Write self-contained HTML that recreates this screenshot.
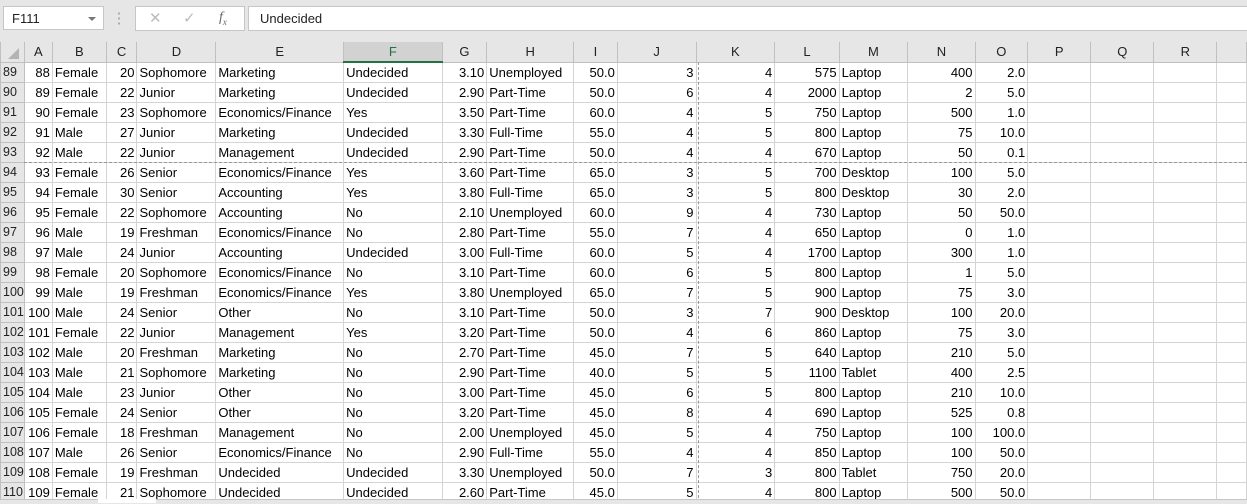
<!DOCTYPE html>
<html><head><meta charset="utf-8"><style>
body{margin:0;width:1247px;height:503px;overflow:hidden;background:#e6e6e6;font-family:"Liberation Sans",sans-serif;position:relative}
.top{position:absolute;left:0;top:0;width:1247px;height:42px;background:#e6e6e6}
.nb{position:absolute;left:3px;top:6px;width:101px;height:24px;background:#fff;border:1px solid #c6c6c6;font-size:13px;line-height:24px;padding-left:8px;box-sizing:border-box;color:#222}
.nb:after{content:"";position:absolute;right:7px;top:10px;border-left:4px solid transparent;border-right:4px solid transparent;border-top:4px solid #777}
.dots{position:absolute;left:118px;top:11px;width:2px;height:14px;background:radial-gradient(circle,#aaa 1px,transparent 1.2px) 0 0/2px 5px}
.fx{position:absolute;left:135px;top:6px;width:110px;height:25px;background:#fff;border:1px solid #c6c6c6;box-sizing:border-box;color:#bbb;font-size:15px}
.fb{position:absolute;left:248px;top:6px;width:1000px;height:25px;background:#fff;border:1px solid #c6c6c6;box-sizing:border-box;font-size:13px;line-height:23px;padding-left:11px;color:#222}
table{position:absolute;left:0;top:42px;border-collapse:collapse;table-layout:fixed;font-size:13px;color:#000;background:#fff}
td{height:19px;border:1px solid #d4d4d4;padding:0 2px;white-space:nowrap;overflow:hidden;line-height:19px}
tr.h td{background:#e6e6e6;text-align:center;color:#222;border-color:#c0c0c0;border-top:none}
td.r{background:#e6e6e6;color:#222;border-color:#c0c0c0;padding:0 0 0 2px;text-align:left;font-size:12.5px}
td.n{text-align:right}
tr.h td.sel{background:#d2d2d2;color:#217346;border-bottom:2px solid #217346}
.hb{position:absolute;left:24px;top:162px;width:1223px;border-top:1px dashed #999}
.vb{position:absolute;left:698px;top:62px;height:441px;border-left:1px dashed #999}
</style></head><body>
<div class="top">
<div class="nb">F111</div>
<div class="dots"></div>
<div class="fx"><span style="position:absolute;left:13px;top:2px">✕</span><span style="position:absolute;left:47px;top:2px">✓</span><span style="position:absolute;left:83px;top:3px;font-family:'Liberation Serif',serif;font-style:italic;color:#666;font-size:14px">f<sub style="font-size:9px">x</sub></span></div>
<div class="fb">Undecided</div>
</div>
<table>
<colgroup><col style="width:16px"><col style="width:28px"><col style="width:54px"><col style="width:31px"><col style="width:79px"><col style="width:128px"><col style="width:99px"><col style="width:45px"><col style="width:87px"><col style="width:44px"><col style="width:80px"><col style="width:80px"><col style="width:65px"><col style="width:69px"><col style="width:68px"><col style="width:53px"><col style="width:64px"><col style="width:64px"><col style="width:64px"><col style="width:30px"></colgroup>
<tr class="h"><td style="background:#e6e6e6;padding:0"><svg width="14" height="14" style="display:block;margin:3px 0 0 5px"><path d="M13 2L13 13L2 13Z" fill="#b4b4b4"/></svg></td><td>A</td><td>B</td><td>C</td><td>D</td><td>E</td><td class="sel">F</td><td>G</td><td>H</td><td>I</td><td>J</td><td>K</td><td>L</td><td>M</td><td>N</td><td>O</td><td>P</td><td>Q</td><td>R</td><td></td></tr>
<tr><td class="r">89</td><td class="n">88</td><td>Female</td><td class="n">20</td><td>Sophomore</td><td>Marketing</td><td>Undecided</td><td class="n">3.10</td><td>Unemployed</td><td class="n">50.0</td><td class="n">3</td><td class="n">4</td><td class="n">575</td><td>Laptop</td><td class="n">400</td><td class="n">2.0</td><td></td><td></td><td></td><td></td></tr>
<tr><td class="r">90</td><td class="n">89</td><td>Female</td><td class="n">22</td><td>Junior</td><td>Marketing</td><td>Undecided</td><td class="n">2.90</td><td>Part-Time</td><td class="n">50.0</td><td class="n">6</td><td class="n">4</td><td class="n">2000</td><td>Laptop</td><td class="n">2</td><td class="n">5.0</td><td></td><td></td><td></td><td></td></tr>
<tr><td class="r">91</td><td class="n">90</td><td>Female</td><td class="n">23</td><td>Sophomore</td><td>Economics/Finance</td><td>Yes</td><td class="n">3.50</td><td>Part-Time</td><td class="n">60.0</td><td class="n">4</td><td class="n">5</td><td class="n">750</td><td>Laptop</td><td class="n">500</td><td class="n">1.0</td><td></td><td></td><td></td><td></td></tr>
<tr><td class="r">92</td><td class="n">91</td><td>Male</td><td class="n">27</td><td>Junior</td><td>Marketing</td><td>Undecided</td><td class="n">3.30</td><td>Full-Time</td><td class="n">55.0</td><td class="n">4</td><td class="n">5</td><td class="n">800</td><td>Laptop</td><td class="n">75</td><td class="n">10.0</td><td></td><td></td><td></td><td></td></tr>
<tr><td class="r">93</td><td class="n">92</td><td>Male</td><td class="n">22</td><td>Junior</td><td>Management</td><td>Undecided</td><td class="n">2.90</td><td>Part-Time</td><td class="n">50.0</td><td class="n">4</td><td class="n">4</td><td class="n">670</td><td>Laptop</td><td class="n">50</td><td class="n">0.1</td><td></td><td></td><td></td><td></td></tr>
<tr><td class="r">94</td><td class="n">93</td><td>Female</td><td class="n">26</td><td>Senior</td><td>Economics/Finance</td><td>Yes</td><td class="n">3.60</td><td>Part-Time</td><td class="n">65.0</td><td class="n">3</td><td class="n">5</td><td class="n">700</td><td>Desktop</td><td class="n">100</td><td class="n">5.0</td><td></td><td></td><td></td><td></td></tr>
<tr><td class="r">95</td><td class="n">94</td><td>Female</td><td class="n">30</td><td>Senior</td><td>Accounting</td><td>Yes</td><td class="n">3.80</td><td>Full-Time</td><td class="n">65.0</td><td class="n">3</td><td class="n">5</td><td class="n">800</td><td>Desktop</td><td class="n">30</td><td class="n">2.0</td><td></td><td></td><td></td><td></td></tr>
<tr><td class="r">96</td><td class="n">95</td><td>Female</td><td class="n">22</td><td>Sophomore</td><td>Accounting</td><td>No</td><td class="n">2.10</td><td>Unemployed</td><td class="n">60.0</td><td class="n">9</td><td class="n">4</td><td class="n">730</td><td>Laptop</td><td class="n">50</td><td class="n">50.0</td><td></td><td></td><td></td><td></td></tr>
<tr><td class="r">97</td><td class="n">96</td><td>Male</td><td class="n">19</td><td>Freshman</td><td>Economics/Finance</td><td>No</td><td class="n">2.80</td><td>Part-Time</td><td class="n">55.0</td><td class="n">7</td><td class="n">4</td><td class="n">650</td><td>Laptop</td><td class="n">0</td><td class="n">1.0</td><td></td><td></td><td></td><td></td></tr>
<tr><td class="r">98</td><td class="n">97</td><td>Male</td><td class="n">24</td><td>Junior</td><td>Accounting</td><td>Undecided</td><td class="n">3.00</td><td>Full-Time</td><td class="n">60.0</td><td class="n">5</td><td class="n">4</td><td class="n">1700</td><td>Laptop</td><td class="n">300</td><td class="n">1.0</td><td></td><td></td><td></td><td></td></tr>
<tr><td class="r">99</td><td class="n">98</td><td>Female</td><td class="n">20</td><td>Sophomore</td><td>Economics/Finance</td><td>No</td><td class="n">3.10</td><td>Part-Time</td><td class="n">60.0</td><td class="n">6</td><td class="n">5</td><td class="n">800</td><td>Laptop</td><td class="n">1</td><td class="n">5.0</td><td></td><td></td><td></td><td></td></tr>
<tr><td class="r">100</td><td class="n">99</td><td>Male</td><td class="n">19</td><td>Freshman</td><td>Economics/Finance</td><td>Yes</td><td class="n">3.80</td><td>Unemployed</td><td class="n">65.0</td><td class="n">7</td><td class="n">5</td><td class="n">900</td><td>Laptop</td><td class="n">75</td><td class="n">3.0</td><td></td><td></td><td></td><td></td></tr>
<tr><td class="r">101</td><td class="n">100</td><td>Male</td><td class="n">24</td><td>Senior</td><td>Other</td><td>No</td><td class="n">3.10</td><td>Part-Time</td><td class="n">50.0</td><td class="n">3</td><td class="n">7</td><td class="n">900</td><td>Desktop</td><td class="n">100</td><td class="n">20.0</td><td></td><td></td><td></td><td></td></tr>
<tr><td class="r">102</td><td class="n">101</td><td>Female</td><td class="n">22</td><td>Junior</td><td>Management</td><td>Yes</td><td class="n">3.20</td><td>Part-Time</td><td class="n">50.0</td><td class="n">4</td><td class="n">6</td><td class="n">860</td><td>Laptop</td><td class="n">75</td><td class="n">3.0</td><td></td><td></td><td></td><td></td></tr>
<tr><td class="r">103</td><td class="n">102</td><td>Male</td><td class="n">20</td><td>Freshman</td><td>Marketing</td><td>No</td><td class="n">2.70</td><td>Part-Time</td><td class="n">45.0</td><td class="n">7</td><td class="n">5</td><td class="n">640</td><td>Laptop</td><td class="n">210</td><td class="n">5.0</td><td></td><td></td><td></td><td></td></tr>
<tr><td class="r">104</td><td class="n">103</td><td>Male</td><td class="n">21</td><td>Sophomore</td><td>Marketing</td><td>No</td><td class="n">2.90</td><td>Part-Time</td><td class="n">40.0</td><td class="n">5</td><td class="n">5</td><td class="n">1100</td><td>Tablet</td><td class="n">400</td><td class="n">2.5</td><td></td><td></td><td></td><td></td></tr>
<tr><td class="r">105</td><td class="n">104</td><td>Male</td><td class="n">23</td><td>Junior</td><td>Other</td><td>No</td><td class="n">3.00</td><td>Part-Time</td><td class="n">45.0</td><td class="n">6</td><td class="n">5</td><td class="n">800</td><td>Laptop</td><td class="n">210</td><td class="n">10.0</td><td></td><td></td><td></td><td></td></tr>
<tr><td class="r">106</td><td class="n">105</td><td>Female</td><td class="n">24</td><td>Senior</td><td>Other</td><td>No</td><td class="n">3.20</td><td>Part-Time</td><td class="n">45.0</td><td class="n">8</td><td class="n">4</td><td class="n">690</td><td>Laptop</td><td class="n">525</td><td class="n">0.8</td><td></td><td></td><td></td><td></td></tr>
<tr><td class="r">107</td><td class="n">106</td><td>Female</td><td class="n">18</td><td>Freshman</td><td>Management</td><td>No</td><td class="n">2.00</td><td>Unemployed</td><td class="n">45.0</td><td class="n">5</td><td class="n">4</td><td class="n">750</td><td>Laptop</td><td class="n">100</td><td class="n">100.0</td><td></td><td></td><td></td><td></td></tr>
<tr><td class="r">108</td><td class="n">107</td><td>Male</td><td class="n">26</td><td>Senior</td><td>Economics/Finance</td><td>No</td><td class="n">2.90</td><td>Full-Time</td><td class="n">55.0</td><td class="n">4</td><td class="n">4</td><td class="n">850</td><td>Laptop</td><td class="n">100</td><td class="n">50.0</td><td></td><td></td><td></td><td></td></tr>
<tr><td class="r">109</td><td class="n">108</td><td>Female</td><td class="n">19</td><td>Freshman</td><td>Undecided</td><td>Undecided</td><td class="n">3.30</td><td>Unemployed</td><td class="n">50.0</td><td class="n">7</td><td class="n">3</td><td class="n">800</td><td>Tablet</td><td class="n">750</td><td class="n">20.0</td><td></td><td></td><td></td><td></td></tr>
<tr><td class="r">110</td><td class="n">109</td><td>Female</td><td class="n">21</td><td>Sophomore</td><td>Undecided</td><td>Undecided</td><td class="n">2.60</td><td>Part-Time</td><td class="n">45.0</td><td class="n">5</td><td class="n">4</td><td class="n">800</td><td>Laptop</td><td class="n">500</td><td class="n">50.0</td><td></td><td></td><td></td><td></td></tr>
</table>
<div class="hb"></div>
<div class="vb"></div>
<div style="position:absolute;left:0;top:499px;width:1247px;height:4px;background:#e6e6e6;border-top:1px solid #c6c6c6"></div>
<div style="position:absolute;left:98px;top:499px;width:58px;height:4px;background:#fff"></div>
</body></html>
